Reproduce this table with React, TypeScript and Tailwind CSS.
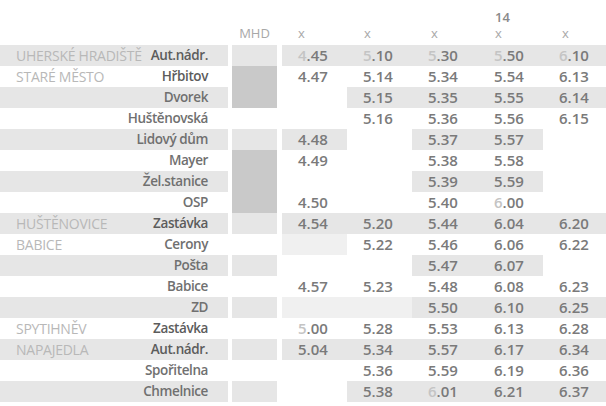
import React from 'react'

type Row = {
    town?: string
    stop: string
    main?: boolean
    name: string
    mhd: string
    times: string[]
    bgs: string[]
}

const bg: Record<string, string> = {
    a: 'bg-[#e6e6e6]',
    d: 'bg-[#c9c9c9]',
    l: 'bg-[#f0f0f0]',
    '': '',
}

const rows: Row[] = [
    {town: 'UHERSKÉ HRADIŠTĚ', stop: 'Aut.nádr.', main: true, name: 'a', mhd: 'a', times: ['*4.45', '*5.10', '*5.30', '*5.50', '*6.10'], bgs: ['a', 'a', 'a', 'a', 'a']},
    {town: 'STARÉ MĚSTO', stop: 'Hřbitov', main: true, name: '', mhd: 'd', times: ['4.47', '5.14', '5.34', '5.54', '6.13'], bgs: ['', '', '', '', '']},
    {stop: 'Dvorek', name: 'a', mhd: 'd', times: ['', '5.15', '5.35', '5.55', '6.14'], bgs: ['', 'a', 'a', 'a', 'a']},
    {stop: 'Huštěnovská', name: '', mhd: '', times: ['', '5.16', '5.36', '5.56', '6.15'], bgs: ['', '', '', '', '']},
    {stop: 'Lidový dům', name: 'a', mhd: 'a', times: ['4.48', '', '5.37', '5.57', ''], bgs: ['a', '', 'a', 'a', '']},
    {stop: 'Mayer', name: '', mhd: 'd', times: ['4.49', '', '5.38', '5.58', ''], bgs: ['', '', '', '', '']},
    {stop: 'Žel.stanice', name: 'a', mhd: 'd', times: ['', '', '5.39', '5.59', ''], bgs: ['', '', 'a', 'a', '']},
    {stop: 'OSP', name: '', mhd: 'd', times: ['4.50', '', '5.40', '*6.00', ''], bgs: ['', '', '', '', '']},
    {town: 'HUŠTĚNOVICE', stop: 'Zastávka', main: true, name: 'a', mhd: 'a', times: ['4.54', '5.20', '5.44', '6.04', '6.20'], bgs: ['a', 'a', 'a', 'a', 'a']},
    {town: 'BABICE', stop: 'Cerony', name: '', mhd: '', times: ['', '5.22', '5.46', '6.06', '6.22'], bgs: ['l', '', '', '', '']},
    {stop: 'Pošta', name: 'a', mhd: 'a', times: ['', '', '5.47', '6.07', ''], bgs: ['', '', 'a', 'a', '']},
    {stop: 'Babice', name: '', mhd: '', times: ['4.57', '5.23', '5.48', '6.08', '6.23'], bgs: ['', '', '', '', '']},
    {stop: 'ZD', name: 'a', mhd: 'a', times: ['', '', '5.50', '6.10', '6.25'], bgs: ['l', 'l', 'a', 'a', 'a']},
    {town: 'SPYTIHNĚV', stop: 'Zastávka', main: true, name: '', mhd: '', times: ['*5.00', '5.28', '5.53', '6.13', '6.28'], bgs: ['', '', '', '', '']},
    {town: 'NAPAJEDLA', stop: 'Aut.nádr.', main: true, name: 'a', mhd: 'a', times: ['5.04', '5.34', '5.57', '6.17', '6.34'], bgs: ['a', 'a', 'a', 'a', 'a']},
    {stop: 'Spořitelna', name: '', mhd: '', times: ['', '5.36', '5.59', '6.19', '6.36'], bgs: ['', '', '', '', '']},
    {stop: 'Chmelnice', name: 'a', mhd: 'a', times: ['', '5.38', '*6.01', '6.21', '6.37'], bgs: ['', 'a', 'a', 'a', 'a']},
]

const cols = 'grid grid-cols-[228px_4px_45px_5px_65px_65px_66px_65px_65px]'

function Time({value}: {value: string}) {
    if (!value) return null
    // leading * marks a new hour: hour digit drawn light
    if (value.startsWith('*')) {
        const v = value.slice(1)
        const [h, m] = v.split('.')
        return (
            <span>
                <span className="text-[#c4c4c4]">{h}</span>.{m}
            </span>
        )
    }
    return <span>{value}</span>
}

export default function App() {
    return (
        <div className="w-[606px] h-[406px] overflow-hidden bg-white font-['Open_Sans',sans-serif]">
            <div className={`${cols} h-[45px] items-end pb-[4px] text-[13px] leading-[16px] text-[#a8a8a8]`}>
                <div/>
                <div/>
                <div className="text-center">MHD</div>
                <div/>
                <div className="pl-[16px]">x</div>
                <div className="pl-[17px]">x</div>
                <div className="pl-[19px]">x</div>
                <div className="pl-[17px] flex flex-col">
                    <span className="font-semibold leading-[12px] mb-[2px] text-[#8a8a8a]">14</span>
                    <span>x</span>
                </div>
                <div className="pl-[19px]">x</div>
            </div>
            {rows.map((r, i) => (
                <div key={i} className={`${cols} h-[21px] leading-[21px]`}>
                    <div className={`${bg[r.name]} flex justify-between whitespace-nowrap pl-[16px] pr-[20px]`}>
                        <span className="text-[14px] tracking-[-0.25px] text-[#b8b8b8]">{r.town}</span>
                        <span className={`text-[13.5px] tracking-[-0.4px] font-semibold ${r.main ? 'text-[#5c5c5c]' : 'text-[#707070]'}`}>{r.stop}</span>
                    </div>
                    <div/>
                    <div className={bg[r.mhd]}/>
                    <div/>
                    {r.times.map((t, j) => (
                        <div key={j} className={`${bg[r.bgs[j]]} pl-[16px] text-[15px] font-semibold text-[#7a7a7a]`}>
                            <Time value={t}/>
                        </div>
                    ))}
                </div>
            ))}
        </div>
    )
}
